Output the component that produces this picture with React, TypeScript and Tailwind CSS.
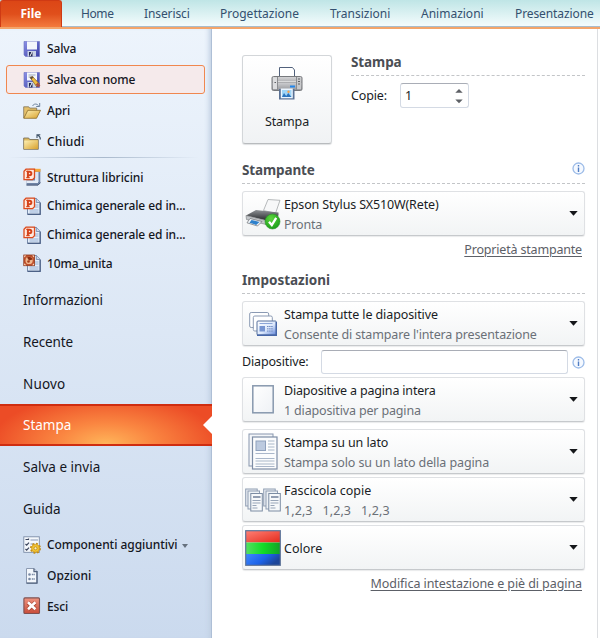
import React from "react";

function Floppy({ pencil = false }: { pencil?: boolean }) {
  return (
    <svg width="18" height="18" viewBox="0 0 18 18">
      <defs>
        <linearGradient id="fl" x1="0" y1="0" x2="1" y2="1">
          <stop offset="0" stopColor="#8c92e6" />
          <stop offset="1" stopColor="#383da6" />
        </linearGradient>
      </defs>
      <path d="M1 1.500h15.500v15H2.500L1 15z" fill="url(#fl)" stroke="#6a6fc0" strokeWidth=".6" />
      <rect x="4" y="1.500" width="10" height="8" fill="#f4f7fc" />
      {pencil && <path d="M5.500 4h7M5.500 6h5" stroke="#9aa5bd" />}
      <rect x="4.500" y="11" width="8.500" height="5.500" fill="#c9d2e6" />
      <path d="M6 12h3.500v4.500H6z" fill="#20264e" />
      <path d="M9 12l-2 4" stroke="#fff" />
      {pencil && (
        <g>
          <path d="M7 6.500l2.500-1 7 7.500-2.800 2.700z" fill="#efbd3f" stroke="#7d5b24" strokeWidth=".7" />
          <path d="M7 6.500l2.500-1 .8 1-2 2z" fill="#5d4c3d" />
          <path d="M14.800 11.500l2.600 3-1.800 1.700-3-2.500z" fill="#a74f43" />
        </g>
      )}
    </svg>
  );
}

function Folder({ open = false }: { open?: boolean }) {
  return (
    <svg width="18" height="18" viewBox="0 0 18 18">
      <defs>
        <linearGradient id="fo" x1="0" y1="0" x2="1" y2="1">
          <stop offset="0" stopColor="#fdf0b4" />
          <stop offset="1" stopColor="#d9a12c" />
        </linearGradient>
      </defs>
      {open ? (
        <g>
          <path d="M.7 16V4.800h5l1 1.300h7V10" fill="#e5c06a" stroke="#7c725a" strokeWidth=".8" />
          <path d="M.8 16.300L4.800 8.300h12.700l-4 8z" fill="url(#fo)" stroke="#8a6a24" strokeWidth=".8" />
          <path d="M9.500 4c1.500-2.500 4-2.500 6-.5M16.700 1v3.500h-3.500" fill="none" stroke="#6d829c" />
        </g>
      ) : (
        <g>
          <path d="M.7 16.300V5h5l1 1.500h8.600v9.800z" fill="#ddb95f" stroke="#6f6651" strokeWidth=".8" />
          <path d="M1.200 7.500h13.600v8.500H1.200z" fill="url(#fo)" />
          <path d="M17.300 6.500c.2-2-.8-3.500-2.800-4.500M14 5V1.700h3.300" fill="none" stroke="#3f5268" strokeWidth="1.100" />
        </g>
      )}
    </svg>
  );
}

function Deck({ kind }: { kind: "show" | "doc" | "old" }) {
  return (
    <svg width="18" height="18" viewBox="0 0 18 18">
      {kind === "show" ? (
        <g>
          <path d="M6 1h11.300v14.500L15 17.300H3.500V6z" fill="#6f84a6" />
          <path d="M6 .8h11.500v3H6z" fill="#f7a838" />
          <path d="M12 4h3.500v10H12z" fill="#dbe6f5" />
          <path d="M3.500 12.500h11.500v2.500H3.500z" fill="#e4ecf7" />
          <path d="M3.500 17.100H15l2.400-2.500" fill="none" stroke="#4f5f7c" />
        </g>
      ) : (
        <g>
          <path d="M4.500 1.500h9l3.700 3.700v12H4.500z" fill="#e4eefa" stroke="#6d82a4" strokeWidth=".9" />
          <path d="M13.300 1.500v4h4" fill="#c8d6ea" stroke="#6d82a4" strokeWidth=".8" />
          <path d="M12 8h3.500M12 10h3.500M6.500 13h9M6.500 15h9" stroke="#91a9cf" strokeWidth=".9" />
          <path d="M17.200 6v11.300H4.500" fill="none" stroke="#4c6186" strokeWidth="1.200" />
        </g>
      )}
      {kind === "old" ? (
        <g>
          <rect x=".8" y="1" width="10.700" height="10.700" fill="#c0532e" stroke="#8d3518" strokeWidth=".8" />
          <circle cx="6.100" cy="6.400" r="3.600" fill="#f0b78e" />
          <path d="M6.100 6.400L4 3.400a3.600 3.600 0 0 1 5.600 2z" fill="#8b2f12" />
          <circle cx="5.500" cy="7.500" r="1.300" fill="#a43d1b" />
          <path d="M1.200 1.400h2l-2 2zM11.100 1.400v2l-2-2zM11.100 11.300h-2l2-2zM1.200 11.300v-2l2 2z" fill="#ffe6cf" />
        </g>
      ) : (
        <g>
          <path d="M3 1.200h8.500v8.500l-2 2H1V3.200z" fill="#ffe9de" stroke="#dc4a1d" strokeWidth="1.300" />
          <path d="M4.900 9.700V3.800h1.700a1.700 1.700 0 0 1 0 3.500H5" fill="none" stroke="#d5431a" strokeWidth="2" />
          <path d="M3.300 9.600h3.400M3.300 3.400h2" stroke="#d5431a" strokeWidth="1.100" />
        </g>
      )}
    </svg>
  );
}

function AddIns() {
  return (
    <svg width="18" height="18" viewBox="0 0 18 18">
      <rect x=".8" y=".8" width="15.500" height="15.500" fill="#f5f8fc" stroke="#7b8ba6" strokeWidth=".9" />
      <path d="M2.500 3.500h3v-1M2.500 8l1.200 1.200L6 6.700M2.500 13l1.200 1.200L6 11.700" fill="none" stroke="#39435c" strokeWidth="1.200" />
      <path d="M7.500 4H15M7.500 8h4" stroke="#8998b5" />
      <circle cx="12.500" cy="12.300" r="4.600" fill="none" stroke="#c28b18" strokeWidth="1.800" strokeDasharray="1.900 1.700" />
      <circle cx="12.500" cy="12.300" r="4" fill="#f2c431" stroke="#c28b18" strokeWidth=".6" />
      <circle cx="12.500" cy="12.300" r="1.500" fill="#fbf0c0" stroke="#b07d16" strokeWidth=".7" />
    </svg>
  );
}

function OptionsIcon() {
  return (
    <svg width="18" height="18" viewBox="0 0 18 18">
      <path d="M3.500 1.500h7.500l3 3v11.700H3.500z" fill="#f3f7fc" stroke="#8c9ab1" />
      <path d="M11 1.500v3.200h3v11.500H3.500" fill="none" stroke="#52637f" strokeWidth="1.300" />
      <circle cx="6.500" cy="7.500" r="1.300" fill="#7a8aa5" />
      <circle cx="6.500" cy="12" r="1.300" fill="#7a8aa5" />
      <path d="M8.800 7.500h3M8.800 12h3" stroke="#7a8aa5" strokeWidth="1.400" strokeDasharray="1.300 .4" />
    </svg>
  );
}

function ExitIcon() {
  return (
    <svg width="18" height="18" viewBox="0 0 18 18">
      <defs>
        <linearGradient id="ex" x1="0" y1="0" x2="0" y2="1">
          <stop offset="0" stopColor="#ef9480" />
          <stop offset="1" stopColor="#c84c39" />
        </linearGradient>
      </defs>
      <rect x=".9" y=".9" width="15.600" height="15.600" rx="1" fill="url(#ex)" stroke="#7f5050" strokeWidth="1.100" />
      <path d="M5 5.500l7.400 6.800M12.400 5.500L5 12.300" stroke="#a5432f" strokeWidth="4" />
      <path d="M5 5.300l7.400 7M12.400 5.300L5 12.300" stroke="#fff" strokeWidth="2.600" />
    </svg>
  );
}

function BigPrinter() {
  return (
    <svg width="34" height="36" viewBox="0 0 34 36">
      <defs>
        <linearGradient id="bp" x1="0" y1="0" x2="0" y2="1">
          <stop offset="0" stopColor="#d7d7d9" />
          <stop offset=".45" stopColor="#a9aaad" />
          <stop offset=".5" stopColor="#c6c7ca" />
          <stop offset="1" stopColor="#94969a" />
        </linearGradient>
      </defs>
      <path d="M9.500 12V1.500h13L24.500 4v8z" fill="#fff" stroke="#51617c" />
      <rect x="2" y="10.500" width="30" height="14" rx="1.500" fill="url(#bp)" stroke="#77797d" />
      <path d="M7.500 11v13M26.500 11v13" stroke="#8b8d91" />
      <rect x="3" y="11.500" width="4" height="11.500" fill="#dcdddf" />
      <rect x="27" y="11.500" width="4" height="11.500" fill="#c8c9cb" />
      <path d="M28 13h2M28 15.500h2M28 18h2M4.500 16.500H6" stroke="#5d5f63" />
      <path d="M8 15.500h18" stroke="#d9dadb" />
      <path d="M20 20.500h5" stroke="#2387ed" strokeWidth="2" />
      <path d="M9 23h15.500v10.500H9z" fill="#5a7194" />
      <path d="M10.800 22.500h12v9.800h-12z" fill="#eaf5ff" />
      <path d="M12 24h9.500v7H12z" fill="#9fd5f7" />
      <path d="M12 31l2-4 2.200 3 2-3 3.300 4z" fill="#2b73bd" />
      <circle cx="18.500" cy="25.700" r="1.200" fill="#f5a04e" />
    </svg>
  );
}

function EpsonIcon() {
  return (
    <svg width="36" height="34" viewBox="0 0 36 34">
      <defs>
        <linearGradient id="ep" x1="0" y1="0" x2="0" y2="1">
          <stop offset="0" stopColor="#8e9195" />
          <stop offset="1" stopColor="#222427" />
        </linearGradient>
        <radialGradient id="gr" cx=".4" cy=".3" r=".8">
          <stop offset="0" stopColor="#5fd63f" />
          <stop offset="1" stopColor="#119714" />
        </radialGradient>
      </defs>
      <path d="M18.500 13.500l4.500-11 12 .8-4.500 13z" fill="#f7f8f9" stroke="#a5a8ab" strokeWidth=".8" />
      <path d="M1 18.500L11 13l22.500 2.500v3L24 24z" fill="url(#ep)" />
      <path d="M1 18.500l22 5.500v4L1.500 22.500z" fill="#c4c7ca" stroke="#777a7e" strokeWidth=".6" />
      <path d="M5 21.500l12 3-4.500 4.500L2 25.800z" fill="#f2f5f8" stroke="#696d72" strokeWidth=".7" />
      <path d="M6.500 22.900l8 2-3.300 3L4.500 25.700z" fill="#2d80cb" />
      <circle cx="27.500" cy="24.500" r="7.500" fill="url(#gr)" stroke="#2b8e29" strokeWidth=".6" />
      <path d="M24 24.800l2.800 3.300 4.400-7.300" fill="none" stroke="#fff" strokeWidth="2.300" />
    </svg>
  );
}

function SlidesIcon() {
  return (
    <svg width="28" height="26" viewBox="0 0 28 26">
      <defs>
        <linearGradient id="sl" x1="0" y1="0" x2="1" y2="1">
          <stop offset="0" stopColor="#fff" />
          <stop offset=".55" stopColor="#dce8fb" />
          <stop offset="1" stopColor="#5f84d9" />
        </linearGradient>
      </defs>
      <rect x=".7" y="1.500" width="19" height="15" rx="1.500" fill="#fff" stroke="#8b9ab3" />
      <rect x="4.300" y="5" width="19" height="15" rx="1.500" fill="#fff" stroke="#8b9ab3" />
      <rect x="8" y="10" width="19.300" height="14" rx="1" fill="url(#sl)" stroke="#56709d" />
      <path d="M8 24.200h19.300V11" fill="none" stroke="#4666a8" strokeWidth="1.400" />
      <path d="M10.500 12.500h13" stroke="#8ca6d8" />
      <rect x="10.500" y="15" width="5.500" height="5.500" fill="#7795d1" />
      <path d="M18 15.500h6M18 17.800h6M18 20.100h6" stroke="#718bc0" strokeDasharray="1.500 .6" />
    </svg>
  );
}

function PageIcon() {
  return (
    <svg width="22" height="29" viewBox="0 0 22 29">
      <defs>
        <linearGradient id="pg" x1="0" y1="0" x2="1" y2="1">
          <stop offset="0" stopColor="#fff" />
          <stop offset="1" stopColor="#eef1f5" />
        </linearGradient>
      </defs>
      <rect x=".8" y=".8" width="20.400" height="27" fill="url(#pg)" stroke="#8798ae" strokeWidth="1.500" />
    </svg>
  );
}

function OneSideIcon() {
  return (
    <svg width="30" height="37" viewBox="0 0 30 37">
      <rect x="1" y="1" width="24" height="32" fill="#f4f6f9" stroke="#8796ad" />
      <rect x="4.500" y="4" width="24.500" height="32" fill="#fbfcfd" stroke="#7d8da5" strokeWidth="1.200" />
      <rect x="8" y="8" width="9.500" height="9.500" fill="#bccadf" stroke="#8fa1bd" />
      <path d="M20 8h6.500M20 11h6.500M20 14h6.500M20 17h6.500M7.500 20.500h19M7.500 25.500h19M7.500 28h19M7.500 31h19M7.500 33.500h19" stroke="#aab7ca" strokeWidth="1.200" />
    </svg>
  );
}

function CollatedIcon() {
  return (
    <svg width="36" height="24" viewBox="0 0 36 24">
      {[0, 18].map((x) => (
        <g key={x} transform={`translate(${x} 0)`}>
          <rect x=".7" y="1" width="11.500" height="17" fill="#e8edf3" stroke="#8f9db2" />
          <rect x="3" y="3" width="11.500" height="18" fill="#eef2f6" stroke="#8f9db2" />
          <rect x="5.800" y="5.500" width="11.500" height="17.500" fill="#f6f8fa" stroke="#7c8ca3" />
          <path d="M8 9h7.500" stroke="#6f7f98" strokeWidth="1.500" />
          <path d="M7.500 12.500h8M7.500 15h8M7.500 17.500h4M7.500 20h5" stroke="#98a5b8" />
        </g>
      ))}
    </svg>
  );
}

function ColorIcon() {
  return (
    <svg width="36" height="36" viewBox="0 0 36 36">
      <defs>
        <linearGradient id="r" x1="0" x2="1" y1="0" y2="1">
          <stop offset="0" stopColor="#ff7f74" />
          <stop offset="1" stopColor="#e32a1c" />
        </linearGradient>
        <linearGradient id="g">
          <stop offset="0" stopColor="#55e062" />
          <stop offset=".5" stopColor="#12dc28" />
          <stop offset="1" stopColor="#13a226" />
        </linearGradient>
        <linearGradient id="b" x1="0" x2="1" y1="0" y2=".4">
          <stop offset="0" stopColor="#3f88ff" />
          <stop offset=".6" stopColor="#1d63e8" />
          <stop offset="1" stopColor="#1d4699" />
        </linearGradient>
      </defs>
      <path fill="url(#r)" d="M1 1h34v11.500H1z" />
      <path fill="url(#g)" d="M1 12.500h34V24H1z" />
      <path fill="url(#b)" d="M1 24h34v11H1z" />
      <rect x=".7" y=".7" width="34.600" height="34.600" fill="none" stroke="#5a7196" strokeWidth="1.200" />
    </svg>
  );
}

function Info() {
  return (
    <svg width="13" height="13" viewBox="0 0 13 13" className="shrink-0">
      <circle cx="6.500" cy="6.500" r="5.500" fill="#f5f9ff" stroke="#9dbce8" strokeWidth="1.300" />
      <path d="M6.500 3v1.500M6.500 5.500V10" stroke="#4f7dc3" strokeWidth="1.400" />
    </svg>
  );
}

function SideRow({ icon, label, cls, text }: { icon: React.ReactNode; label: string; cls: string; text: string }) {
  return (
    <div className={`flex shrink-0 items-center whitespace-nowrap pl-[23px] text-xs font-medium text-[#14161e] ${cls}`}>
      {icon}
      <span className={`ml-1.5 ${text}`}>{label}</span>
    </div>
  );
}

function NavRow({ label, text }: { label: string; text: string }) {
  return (
    <div className="flex h-[41.8px] shrink-0 items-center whitespace-nowrap pl-[23px] text-[13.5px] text-[#14161e]">
      <span className={text}>{label}</span>
    </div>
  );
}

function Option({ icon, title, sub, t, s, cls }: { icon: React.ReactNode; title: string; sub?: string; t: string; s?: string; cls: string }) {
  return (
    <div className={`flex h-[45px] w-[343px] shrink-0 items-center rounded-[3px] border border-[#dfe1e4] border-b-[#c6c9cc] bg-gradient-to-b from-white to-[#f2f4f5] pr-1.5 shadow-[0_1px_1px_#e9eaeb] ${cls}`}>
      <div className="mr-[2px] flex w-[39px] shrink-0 items-center justify-center">{icon}</div>
      <div className="grow whitespace-nowrap pt-[2px] text-[12.5px] leading-5">
        <div className={`text-[#1a1d25] ${t}`}>{title}</div>
        {sub && <div className={`whitespace-pre text-[#6b7077] ${s}`}>{sub}</div>}
      </div>
      <svg width="9" height="5" viewBox="0 0 9 5">
        <path d="M.3 0h8.400L4.500 4.700z" fill="#15171a" />
      </svg>
    </div>
  );
}

function Heading({ children, text, info = false }: { children: string; text: string; info?: boolean }) {
  return (
    <div className="flex h-[22px] items-start justify-between border-b border-dashed border-[#c3c5c8] text-[13.5px] font-bold leading-4 text-[#4b4e54]">
      <span className={text}>{children}</span>
      {info && <Info />}
    </div>
  );
}

export default function App() {
  return (
    <div className="flex h-[638px] w-[600px] flex-col overflow-hidden bg-white font-['Noto_Sans','Open_Sans',sans-serif]">
      <header className="flex h-[29px] shrink-0 items-start border-b-2 border-[#f3a56b] bg-gradient-to-b from-[#bfe5e6] to-[#f6fdfe]">
        <div className="flex h-[27px] w-[62px] items-center justify-center rounded-t-[3px] border border-b-0 border-[#cf3a14] bg-gradient-to-b from-[#dc4616] via-[#e04f1b] to-[#f37a3d] text-xs font-bold text-white">
          <span>File</span>
        </div>
        <nav className="flex h-[27px] grow items-center whitespace-nowrap border-b border-[#a9bccb] pl-[19px] pt-[2px] text-xs text-[#34506f]">
          <span className="w-[63px] tracking-[-0.4px]">Home</span>
          <span className="w-[76px] tracking-[-0.1px]">Inserisci</span>
          <span className="w-[110px]">Progettazione</span>
          <span className="w-[91px]">Transizioni</span>
          <span className="w-[94px]">Animazioni</span>
          <span className="w-[80px] tracking-[-0.1px]">Presentazione</span>
        </nav>
      </header>
      <div className="flex grow">
        <aside className="flex w-[212px] shrink-0 flex-col border-r border-[#aebfd6] bg-gradient-to-b from-[#edf4fc] to-[#cbdaee] pt-1 shadow-[inset_-5px_0_5px_-3px_#c0cfe2]">
          <SideRow icon={<Floppy />} label="Salva" cls="h-[31px]" text="tracking-[-0.15px]" />
          <SideRow icon={<Floppy pencil />} label="Salva con nome" cls="mx-[6px] mt-px mb-px h-[29px] rounded-[3px] border border-[#f0874f] bg-[#f5eaeb] !pl-4" text="tracking-[-0.12px]" />
          <SideRow icon={<Folder open />} label="Apri" cls="h-[31px]" text="tracking-[-0.1px]" />
          <SideRow icon={<Folder />} label="Chiudi" cls="h-[31px]" text="tracking-[0.15px]" />
          <div className="mb-[5px] ml-2 mr-3 h-px shrink-0 bg-gradient-to-r from-transparent via-[#a9b9cc] to-transparent" />
          <SideRow icon={<Deck kind="show" />} label="Struttura libricini" cls="h-[28.7px]" text="pt-px tracking-[-0.05px]" />
          <SideRow icon={<Deck kind="doc" />} label="Chimica generale ed in..." cls="h-[28.7px]" text="tracking-[-0.08px]" />
          <SideRow icon={<Deck kind="doc" />} label="Chimica generale ed in..." cls="h-[28.7px]" text="tracking-[-0.08px]" />
          <SideRow icon={<Deck kind="old" />} label="10ma_unita" cls="mb-[1.2px] h-[28.7px]" text="pt-px tracking-[-0.15px]" />
          <NavRow label="Informazioni" text="tracking-[-0.12px]" />
          <NavRow label="Recente" text="tracking-[-0.15px]" />
          <NavRow label="Nuovo" text="pt-px tracking-[0.15px]" />
          <div className="-mr-px flex h-[41.8px] shrink-0 items-center justify-between border-y-2 border-[#cf2d10] bg-[radial-gradient(ellipse_115px_50px_at_50%_100%,#ffb55a_0%,#fa8641_42%,#ec4c26_100%)] pl-[23px] text-[13.5px] text-white">
            <span>Stampa</span>
            <svg width="9" height="18" viewBox="0 0 9 18">
              <path d="M9 0L0 9l9 9z" fill="#fff" />
            </svg>
          </div>
          <NavRow label="Salva e invia" text="" />
          <NavRow label="Guida" text="" />
          <SideRow icon={<AddIns />} label="Componenti aggiuntivi" cls="h-[30.700px]" text="tracking-[-0.05px] after:ml-[5px] after:inline-block after:border-x-[3.5px] after:border-t-4 after:border-x-transparent after:border-t-[#66717e] after:align-middle after:content-['']" />
          <SideRow icon={<OptionsIcon />} label="Opzioni" cls="h-[30.700px]" text="tracking-[0.08px]" />
          <SideRow icon={<ExitIcon />} label="Esci" cls="h-[30.700px]" text="pt-px tracking-[-0.15px]" />
        </aside>
        <main className="mr-[2px] flex grow flex-col border-r border-[#dcdee1] bg-white pl-[30px]">
          <div className="mt-[26px] flex h-[89px] w-[343px] shrink-0">
            <div className="flex h-[89px] w-[90px] flex-col items-center rounded-[3px] border border-[#d3d6d9] border-b-[#b8bbbe] bg-gradient-to-b from-white to-[#f0f2f4] pt-[10px] text-[12.5px] text-[#1a1d25] shadow-[0_1px_1px_#dfe1e3]">
              <BigPrinter />
              <span className="mt-[10px] leading-5 tracking-[-0.1px]">Stampa</span>
            </div>
            <div className="-mt-[1px] ml-[19px] grow">
              <Heading text="tracking-[-0.1px]">Stampa</Heading>
              <div className="mt-[7px] flex h-[25px] items-center text-[12.5px] text-[#1a1d25]">
                <span className="w-[49px] pt-[2px] tracking-[-0.15px]">Copie:</span>
                <div className="flex h-[25px] w-[69px] items-center justify-between rounded-[3px] border border-[#d4dae4] border-t-[#a9adb6] bg-white pl-1 pr-[5px]">
                  <span className="pt-[2px]">1</span>
                  <svg width="8" height="16" viewBox="0 0 8 16">
                    <path d="M.3 4.700L4 .9l3.700 3.800zM.3 11.500L4 15.300l3.700-3.800z" fill="#5d6065" />
                  </svg>
                </div>
              </div>
            </div>
          </div>
          <div className="mt-[18px] w-[343px]"><Heading info text="tracking-[-0.13px]">Stampante</Heading></div>
          <Option cls="mt-[7px]" icon={<EpsonIcon />} title="Epson Stylus SX510W(Rete)" sub="Pronta" t="tracking-[-0.15px]" s="tracking-[-0.2px]" />
          <div className="mt-[4px] h-5 w-[340px] text-right text-[12.5px] leading-5 tracking-[-0.18px] text-[#5c6067] underline underline-offset-2">Proprietà stampante</div>
          <div className="mt-[12px] w-[343px]"><Heading text="">Impostazioni</Heading></div>
          <Option cls="mt-[7px]" icon={<SlidesIcon />} title="Stampa tutte le diapositive" sub="Consente di stampare l'intera presentazione" t="tracking-[-0.1px]" s="tracking-[-0.15px]" />
          <div className="mt-[4px] flex h-6 w-[344px] shrink-0 items-center text-[12.5px] text-[#1a1d25]">
            <span className="w-[79px] pt-px tracking-[-0.15px]">Diapositive:</span>
            <div className="mr-1 h-6 w-[247px] rounded-[3px] border border-[#d4dae4] border-t-[#a9adb6] bg-white" />
            <Info />
          </div>
          <Option cls="mt-[3px]" icon={<PageIcon />} title="Diapositive a pagina intera" sub="1 diapositiva per pagina" t="tracking-[-0.18px]" s="tracking-[-0.16px]" />
          <Option cls="mt-[7px]" icon={<OneSideIcon />} title="Stampa su un lato" sub="Stampa solo su un lato della pagina" t="tracking-[-0.1px]" s="tracking-[-0.1px]" />
          <Option cls="mt-[3px]" icon={<CollatedIcon />} title="Fascicola copie" sub="1,2,3   1,2,3   1,2,3" t="" s="tracking-[0.08px]" />
          <Option cls="mt-[3px]" icon={<ColorIcon />} title="Colore" t="" />
          <div className="mt-[4px] h-5 w-[340px] whitespace-nowrap text-right text-[12.5px] leading-5 tracking-[-0.08px] text-[#5c6067] underline underline-offset-2">Modifica intestazione e piè di pagina</div>
        </main>
      </div>
    </div>
  );
}
